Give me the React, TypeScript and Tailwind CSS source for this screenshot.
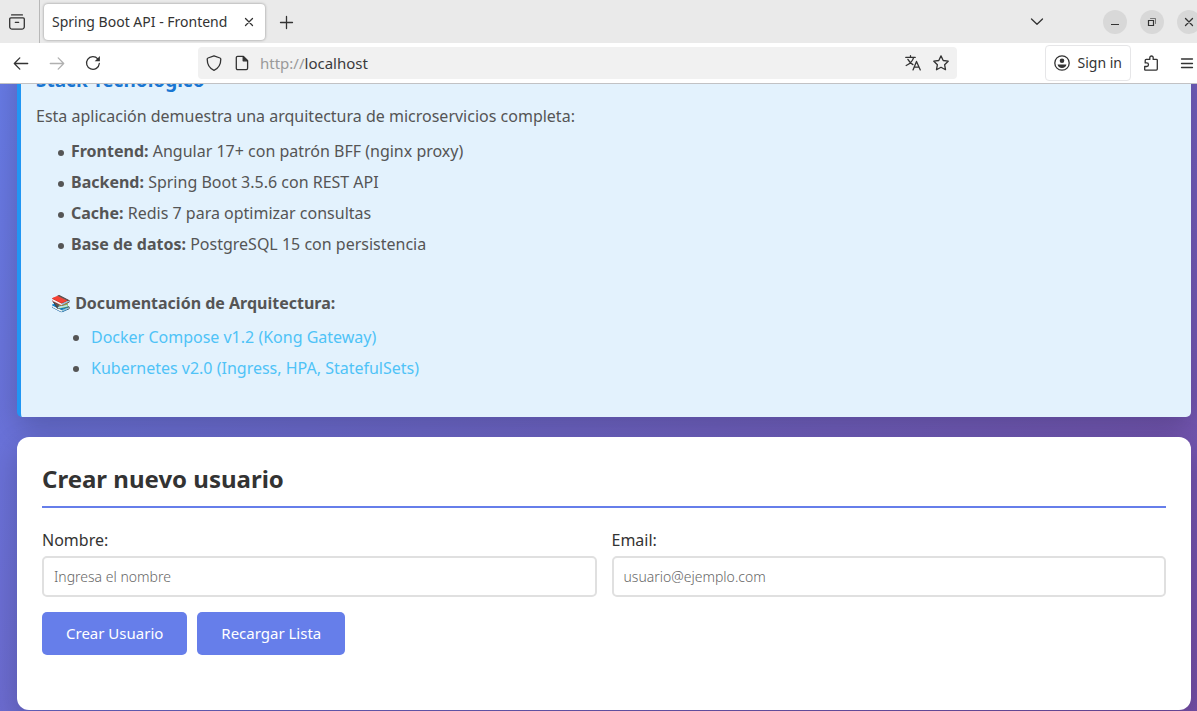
import React from 'react';

const stack = [
  { name: 'Frontend:', text: 'Angular 17+ con patrón BFF (nginx proxy)' },
  { name: 'Backend:', text: 'Spring Boot 3.5.6 con REST API' },
  { name: 'Cache:', text: 'Redis 7 para optimizar consultas' },
  { name: 'Base de datos:', text: 'PostgreSQL 15 con persistencia' },
];

const docs = ['Docker Compose v1.2 (Kong Gateway)', 'Kubernetes v2.0 (Ingress, HPA, StatefulSets)'];

function Icon({ children, className = 'size-4' }: { children: React.ReactNode; className?: string }) {
  return (
    <svg
      viewBox="0 0 16 16"
      className={`${className} shrink-0`}
      fill="none"
      stroke="currentColor"
      strokeWidth="1.3"
      strokeLinecap="round"
      strokeLinejoin="round"
      aria-hidden="true"
    >
      {children}
    </svg>
  );
}

function TabBar() {
  return (
    <div className="flex h-[43px] shrink-0 items-center overflow-hidden bg-[#eaeaea]">
      <button aria-label="Vista de Firefox" className="flex h-full w-[40px] shrink-0 items-center border-r border-[#b8b8b8] pl-[9px]">
        <Icon>
          <path d="M2.6.9h10.8M1.8 3.900h12.400a1.100 1.100 0 0 1 1.100 1.100v7.700a2.400 2.400 0 0 1-2.400 2.400H3.100a2.400 2.400 0 0 1-2.400-2.400V5a1.100 1.100 0 0 1 1.100-1.100zM6.300 8.300h3.400" />
        </Icon>
      </button>
      <div className="ml-[4px] flex h-9 w-[221px] shrink-0 items-center justify-between rounded bg-white pr-2 pl-2 shadow-[0_0_3px_rgba(0,0,0,0.4)]">
        <span className="text-sm whitespace-nowrap">Spring Boot API - Frontend</span>
        <button aria-label="Cerrar pestaña">
          <Icon>
            <path d="m4.500 4.500 7 7m0-7-7 7" />
          </Icon>
        </button>
      </div>
      <button aria-label="Nueva pestaña" className="ml-[13px]">
        <Icon>
          <path d="M8.500 2.500v12M2.500 8.500h12" />
        </Icon>
      </button>
      <button aria-label="Listar pestañas" className="mr-[58px] ml-auto">
        <Icon>
          <path d="m2.500 5 5.500 5.300L13.500 5" />
        </Icon>
      </button>
      <div className="-mr-1 flex shrink-0 gap-[13px]">
        <button aria-label="Minimizar" className="flex size-6 items-center justify-center rounded-full bg-[#d8d8d8]">
          <Icon>
            <path d="M4 10.500h8" strokeLinecap="butt" strokeWidth="1" />
          </Icon>
        </button>
        <button aria-label="Restaurar" className="flex size-6 items-center justify-center rounded-full bg-[#d8d8d8]">
          <Icon>
            <path d="M4.500 6.500h5v5h-5z" strokeLinejoin="miter" strokeWidth="1.200" />
            <path d="M6.500 4.500h5v5" strokeLinejoin="miter" strokeWidth="1" opacity=".6" />
          </Icon>
        </button>
        <button aria-label="Cerrar" className="flex size-6 items-center justify-center rounded-full bg-[#d8d8d8]">
          <Icon>
            <path d="m4.500 4.500 7 7m0-7-7 7" />
          </Icon>
        </button>
      </div>
    </div>
  );
}

function NavBar() {
  return (
    <div className="flex h-[41px] shrink-0 items-center border-b border-[#c2c2c4] bg-white pr-[2px] pl-[13px]">
      <div className="flex w-[185px] shrink-0 items-center gap-5">
        <button aria-label="Atrás">
          <Icon>
            <path d="M1.300 8.500h13.400M6.800 2.900 1.300 8.500l5.500 5.600" />
          </Icon>
        </button>
        <button aria-label="Adelante" className="text-[#b0b0b0]">
          <Icon>
            <path d="M1.300 8.500h13.400M9.200 2.900l5.500 5.600-5.500 5.600" />
          </Icon>
        </button>
        <button aria-label="Recargar">
          <Icon>
            <path d="M14.300 8.500A6.400 6.400 0 1 1 12.800 3.800" />
            <path d="M14.900 1v5.200H9.700z" fill="currentColor" stroke="none" />
          </Icon>
        </button>
      </div>
      <div className="flex h-8 w-[759px] min-w-0 items-center rounded bg-[#f1f1f1] px-2">
        <Icon>
          <path d="M8 .8 14 3q.8.300.8 1.100C14.800 9.500 12 13.700 8 15.300 4 13.700 1.200 9.500 1.200 4.100Q1.200 3.300 2 3z" />
        </Icon>
        <Icon className="ml-3 size-4">
          <path d="M3.600 1.400h5.800l4.200 4.200v7.700a1.300 1.300 0 0 1-1.300 1.300H3.600a1.300 1.300 0 0 1-1.300-1.300V2.700a1.300 1.300 0 0 1 1.300-1.300z" />
          <path d="M9.200 1.600v4.200h4.200z" fill="currentColor" />
        </Icon>
        <span className="ml-[10px] text-[15px] leading-5 text-[#3a3a3c]">
          <span className="text-[#9a9a9a]">http://</span>localhost
        </span>
        <button aria-label="Traducir" className="ml-auto">
          <Icon>
            <path d="M.8 2.400h9.400M5.500.7v1.700M8.600 2.600C7.600 6 5 8.700 1.200 10.500M2.900 4.400c1.200 2.200 2.800 3.900 5 5.200M8 14.900l3.500-8.500 3.800 8.500M9.200 12.200h4.900" />
          </Icon>
        </button>
        <button aria-label="Marcar página" className="ml-3">
          <Icon>
            <path d="m8 .9 2.200 4.600 5 .7-3.600 3.500.9 5L8 12.300l-4.500 2.400.9-5L.8 6.200l5-.7z" />
          </Icon>
        </button>
      </div>
      <button className="ml-auto flex h-9 shrink-0 items-center gap-2 rounded border border-[#e6e6e8] px-2">
        <Icon>
          <circle cx="8" cy="8" r="7.200" />
          <circle cx="8" cy="5.700" r="2.300" fill="currentColor" stroke="none" />
          <path d="M3.600 9.600h8.800c-.3 2-2 3.500-4.400 3.500s-4.100-1.500-4.400-3.500z" fill="currentColor" stroke="none" />
        </Icon>
        <span className="text-sm whitespace-nowrap">Sign in</span>
      </button>
      <button aria-label="Extensiones" className="ml-3">
        <Icon>
          <path d="M2 15.100h11.300a1 1 0 0 0 1-1V5.200a.8.8 0 0 0-.8-.8H10.200V2.700a1.700 1.700 0 0 0-3.400 0v1.700H3.200a1 1 0 0 0-1 1v2.500h1.500a1.800 1.800 0 0 1 0 3.600H1.700v3.200z" />
        </Icon>
      </button>
      <button aria-label="Menú" className="ml-5">
        <Icon>
          <path d="M2.500 4h11M2.500 8.500h11M2.500 12.500h11" />
        </Icon>
      </button>
    </div>
  );
}

function StackCard() {
  return (
    <section className="shrink-0 rounded-[5px] border-l-4 border-[#2196f3] bg-[#e3f2fd] px-[15px] pt-[15px] pb-[33px] leading-6 text-[#555] shadow-[0_10px_30px_rgba(0,0,0,0.2)]">
      <h3 className="mb-3 text-[19px] leading-6 font-bold text-[#1976d2]">Stack Tecnológico</h3>
      <p>Esta aplicación demuestra una arquitectura de microservicios completa:</p>
      <ul className="mt-2 pl-[22px] leading-[31px]">
        {stack.map((item) => (
          <li
            key={item.name}
            className="before:mr-[7px] before:inline-block before:size-[6px] before:rounded-full before:bg-current before:align-middle before:content-['']"
          >
            <strong>{item.name}</strong> {item.text}
          </li>
        ))}
      </ul>
      <div className="mt-[31px] px-[15px]">
        <strong>📚 Documentación de Arquitectura:</strong>
        <ul className="mt-[7px] list-disc pl-10 leading-[31px]">
          {docs.map((doc) => (
            <li key={doc}>
              <a href="#" className="text-[#4fc3f7]">
                {doc}
              </a>
            </li>
          ))}
        </ul>
      </div>
    </section>
  );
}

function Field({ id, label, type, placeholder }: { id: string; label: string; type: string; placeholder: string }) {
  return (
    <div className="flex min-w-0 flex-col gap-1">
      <label htmlFor={id} className="leading-6">
        {label}
      </label>
      <input
        id={id}
        type={type}
        placeholder={placeholder}
        className="h-[41px] w-full rounded-[5px] border-2 border-[#e0e0e0] bg-white px-[10px] text-sm font-light placeholder:text-[#666]"
      />
    </div>
  );
}

function CreateUserCard() {
  return (
    <section className="shrink-0 rounded-xl bg-white px-[25px] pt-[25px] pb-[55px] shadow-[0_10px_30px_rgba(0,0,0,0.2)]">
      <h2 className="mb-5 border-b-2 border-[#667eea] pb-[10px] text-2xl leading-[34px] font-bold">Crear nuevo usuario</h2>
      <form onSubmit={(event) => event.preventDefault()}>
        <div className="grid grid-cols-2 gap-[15px]">
          <Field id="nombre" label="Nombre:" type="text" placeholder="Ingresa el nombre" />
          <Field id="email" label="Email:" type="email" placeholder="usuario@ejemplo.com" />
        </div>
        <div className="mt-[15px] flex gap-[10px]">
          <button type="submit" className="h-[43px] rounded-[5px] bg-[#667eea] px-6 text-[15px] text-white">
            Crear Usuario
          </button>
          <button type="button" className="h-[43px] rounded-[5px] bg-[#667eea] px-6 text-[15px] text-white">
            Recargar Lista
          </button>
        </div>
      </form>
    </section>
  );
}

export default function App() {
  return (
    <div className="flex h-screen flex-col overflow-hidden font-['Noto_Sans','Open_Sans',sans-serif] text-[#333]">
      <TabBar />
      <NavBar />
      <main className="flex min-h-0 flex-1 flex-col justify-end gap-5 overflow-hidden bg-[linear-gradient(135deg,#667eea_-8%,#764ba2_108%)] pr-[6px] pb-px pl-[17px]">
        <StackCard />
        <CreateUserCard />
      </main>
    </div>
  );
}
